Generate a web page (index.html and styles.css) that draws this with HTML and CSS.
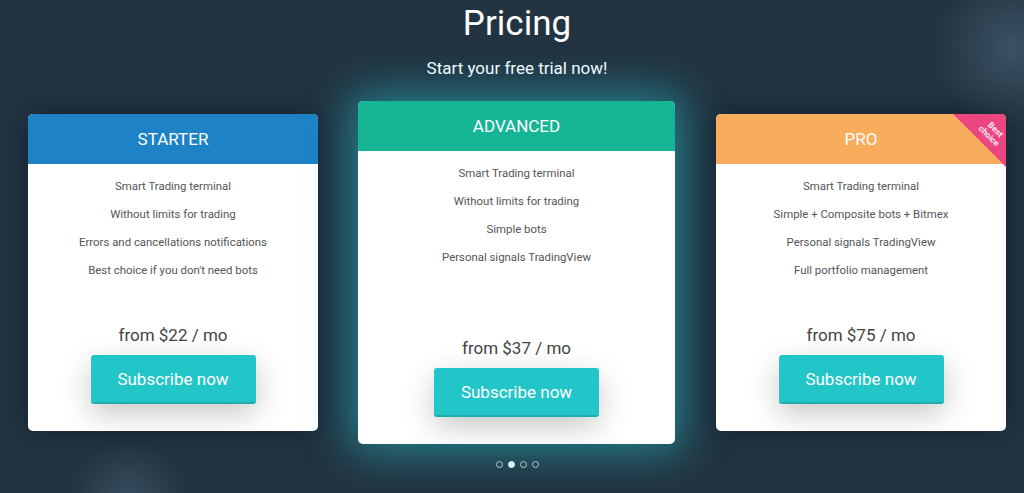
FILE: index.html
```html
<!DOCTYPE html>
<html lang="en">
<head>
<meta charset="utf-8">
<title>Pricing</title>
<link rel="stylesheet" href="styles.css">
</head>
<body>
<main class="pricing">
  <h1 class="pricing-title">Pricing</h1>
  <p class="pricing-subtitle">Start your free trial now!</p>
  <div class="plans">
    <section class="plan plan-starter">
      <header class="plan-head">STARTER</header>
      <ul class="plan-features">
        <li>Smart Trading terminal</li>
        <li>Without limits for trading</li>
        <li>Errors and cancellations notifications</li>
        <li>Best choice if you don't need bots</li>
      </ul>
      <div class="plan-foot">
        <div class="plan-price">from $22 / mo</div>
        <button class="plan-btn">Subscribe now</button>
      </div>
    </section>
    <section class="plan plan-advanced">
      <header class="plan-head">ADVANCED</header>
      <ul class="plan-features">
        <li>Smart Trading terminal</li>
        <li>Without limits for trading</li>
        <li>Simple bots</li>
        <li>Personal signals TradingView</li>
      </ul>
      <div class="plan-foot">
        <div class="plan-price">from $37 / mo</div>
        <button class="plan-btn">Subscribe now</button>
      </div>
    </section>
    <section class="plan plan-pro">
      <header class="plan-head">PRO</header>
      <div class="ribbon"><span class="ribbon-text">Best<br>choice</span></div>
      <ul class="plan-features">
        <li>Smart Trading terminal</li>
        <li>Simple + Composite bots + Bitmex</li>
        <li>Personal signals TradingView</li>
        <li>Full portfolio management</li>
      </ul>
      <div class="plan-foot">
        <div class="plan-price">from $75 / mo</div>
        <button class="plan-btn">Subscribe now</button>
      </div>
    </section>
  </div>
  <div class="dots">
    <span class="dot"></span>
    <span class="dot dot-active"></span>
    <span class="dot"></span>
    <span class="dot"></span>
  </div>
</main>
</body>
</html>
```

FILE: styles.css
```css
html, body {
  margin: 0;
  padding: 0;
}
body {
  width: 1024px;
  height: 493px;
  overflow: hidden;
  font-family: Roboto, "Liberation Sans", Arial, sans-serif;
  background:
    radial-gradient(circle at 1012px 48px, rgba(80, 110, 130, 0.55) 0, rgba(80, 110, 130, 0.25) 40px, rgba(80, 110, 130, 0) 80px),
    radial-gradient(circle at 128px 500px, rgba(80, 110, 130, 0.45) 0, rgba(80, 110, 130, 0) 60px),
    #223342;
  color: #fff;
}
.pricing {
  display: flex;
  flex-direction: column;
  align-items: center;
  padding-left: 10px;
}
.pricing-title {
  margin: 4px 0 0;
  font-size: 35px;
  line-height: 40px;
  font-weight: 400;
}
.pricing-subtitle {
  margin: 12px 0 0;
  font-size: 17px;
  line-height: 24px;
}
.plans {
  margin-top: 21px;
  display: flex;
  align-items: center;
  gap: 40px;
}
.plan {
  position: relative;
  width: 290px;
  height: 317px;
  background: #fff;
  border-radius: 5px;
  overflow: hidden;
  display: flex;
  flex-direction: column;
  box-shadow: 0 0 30px rgba(0, 0, 0, 0.35);
}
.plan-advanced {
  width: 317px;
  height: 343px;
  box-shadow: 0 0 44px 8px rgba(40, 195, 200, 0.55);
}
.plan-pro {
  margin-left: 1px;
}
.plan-head {
  height: 50px;
  flex: none;
  display: flex;
  align-items: center;
  justify-content: center;
  font-size: 17px;
  color: #fff;
}
.plan-starter .plan-head { background: #1e82c6; }
.plan-advanced .plan-head { background: #15b595; }
.plan-pro .plan-head { background: #f7ad5c; }
.ribbon {
  position: absolute;
  top: 0;
  right: 0;
  width: 53px;
  height: 53px;
  background: #ec4680;
  clip-path: polygon(0 0, 100% 0, 100% 100%);
}
.ribbon-text {
  position: absolute;
  top: 10px;
  right: -6px;
  width: 40px;
  transform: rotate(45deg);
  font-size: 8.5px;
  line-height: 9px;
  font-weight: 700;
  text-align: center;
  color: #fde7ef;
}
.plan-features {
  list-style: none;
  margin: 0;
  padding: 8px 0 0;
  text-align: center;
  font-size: 11.4px;
  line-height: 28px;
  color: #555;
}
.plan-foot {
  margin-top: auto;
  padding-bottom: 27px;
  display: flex;
  flex-direction: column;
  align-items: center;
}
.plan-price {
  font-size: 17px;
  line-height: 24px;
  color: #444;
}
.plan-btn {
  margin-top: 8px;
  width: 165px;
  height: 49px;
  border: 0;
  border-bottom: 2px solid #1cacae;
  border-radius: 3px;
  background: #23c6c8;
  color: #fff;
  font-family: inherit;
  font-size: 17px;
  box-shadow: 0 10px 30px rgba(0, 0, 0, 0.22);
  cursor: pointer;
}
.dots {
  margin-top: 17px;
  display: flex;
  gap: 5px;
}
.dot {
  width: 5px;
  height: 5px;
  border: 1px solid #c8d0d6;
  border-radius: 50%;
}
.dot-active {
  background: #fff;
  border-color: #fff;
}
```
